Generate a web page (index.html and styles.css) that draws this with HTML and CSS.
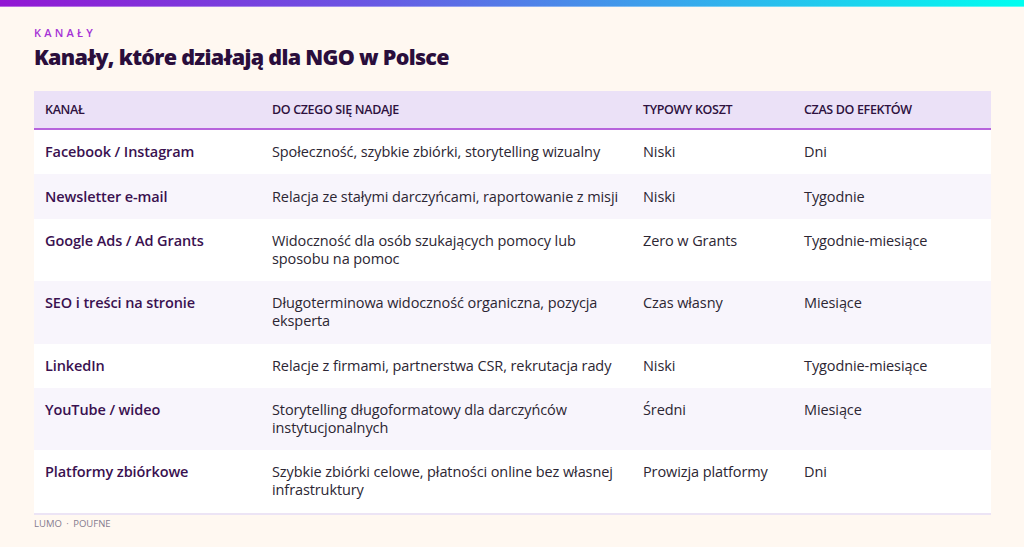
FILE: index.html
```html
<!DOCTYPE html>
<html lang="pl">
<head>
<meta charset="utf-8">
<link rel="stylesheet" href="styles.css">
</head>
<body>
<div class="topbar"></div>
<main class="page">
  <div class="eyebrow">KANAŁY</div>
  <h1 class="title">Kanały, które działają dla NGO w Polsce</h1>
  <table class="grid">
    <colgroup>
      <col class="c1"><col class="c2"><col class="c3"><col class="c4">
    </colgroup>
    <thead>
      <tr><th>Kanał</th><th>Do czego się nadaje</th><th>Typowy koszt</th><th>Czas do efektów</th></tr>
    </thead>
    <tbody>
      <tr><td class="name">Facebook / Instagram</td><td>Społeczność, szybkie zbiórki, storytelling wizualny</td><td>Niski</td><td>Dni</td></tr>
      <tr><td class="name">Newsletter e-mail</td><td>Relacja ze stałymi darczyńcami, raportowanie z misji</td><td>Niski</td><td>Tygodnie</td></tr>
      <tr><td class="name">Google Ads / Ad Grants</td><td>Widoczność dla osób szukających pomocy lub sposobu na pomoc</td><td>Zero w Grants</td><td>Tygodnie-miesiące</td></tr>
      <tr><td class="name">SEO i treści na stronie</td><td>Długoterminowa widoczność organiczna, pozycja eksperta</td><td>Czas własny</td><td>Miesiące</td></tr>
      <tr><td class="name">LinkedIn</td><td>Relacje z firmami, partnerstwa CSR, rekrutacja rady</td><td>Niski</td><td>Tygodnie-miesiące</td></tr>
      <tr><td class="name">YouTube / wideo</td><td>Storytelling długoformatowy dla darczyńców instytucjonalnych</td><td>Średni</td><td>Miesiące</td></tr>
      <tr><td class="name">Platformy zbiórkowe</td><td>Szybkie zbiórki celowe, płatności online bez własnej infrastruktury</td><td>Prowizja platformy</td><td>Dni</td></tr>
    </tbody>
  </table>
  <div class="footer">LUMO <span class="dot">·</span> POUFNE</div>
</main>
</body>
</html>
```
FILE: styles.css
```css
* { box-sizing: border-box; }
html, body { margin: 0; padding: 0; }
body {
  background: #fff8f1;
  font-family: "Open Sans", "Noto Sans", sans-serif;
  color: #2b2433;
  width: 1024px;
  height: 547px;
  overflow: hidden;
}
.topbar {
  height: 7px;
  background: linear-gradient(90deg, #9316d3 0%, #6b55e3 35%, #3aa4ec 65%, #00fff0 100%);
  border-bottom: 1px solid rgba(255,255,255,0.35);
}
.page { padding: 19px 34px 0 34px; }
.eyebrow {
  font-size: 11px;
  letter-spacing: 3.2px;
  color: #a532d6;
  font-weight: 600;
  line-height: 14px;
}
.title {
  margin: 2px 0 19px 0;
  font-size: 21.5px;
  line-height: 30px;
  font-weight: 800;
  color: #2a0e3c;
  letter-spacing: -0.7px;
}
.grid {
  width: 957px;
  border-collapse: collapse;
  table-layout: fixed;
  border-bottom: 2px solid #ece4f5;
}
.c1 { width: 227px; }
.c2 { width: 371px; }
.c3 { width: 161px; }
.c4 { width: 198px; }
th {
  background: #ebe1f7;
  text-align: left;
  font-size: 12.5px;
  font-weight: 600;
  text-transform: uppercase;
  color: #2e1140;
  padding: 9px 11px 10px 11px;
  height: 38px;
  border-bottom: 2px solid #b663dc;
  letter-spacing: -0.35px;
}
td {
  font-size: 14.5px;
  line-height: 18px;
  padding: 13.2px 11px 13.2px 11px;
  vertical-align: top;
  color: #2c2633;
  letter-spacing: -0.1px;
}
tbody tr:nth-child(odd) { background: #ffffff; }
tbody tr:nth-child(even) { background: #f8f5fc; }
td.name { font-weight: 600; color: #3a1150; }
.footer {
  margin-top: 2px;
  font-size: 9.5px;
  color: #857b8e;
  letter-spacing: 0;
}
.dot { margin: 0 2px; }
```
